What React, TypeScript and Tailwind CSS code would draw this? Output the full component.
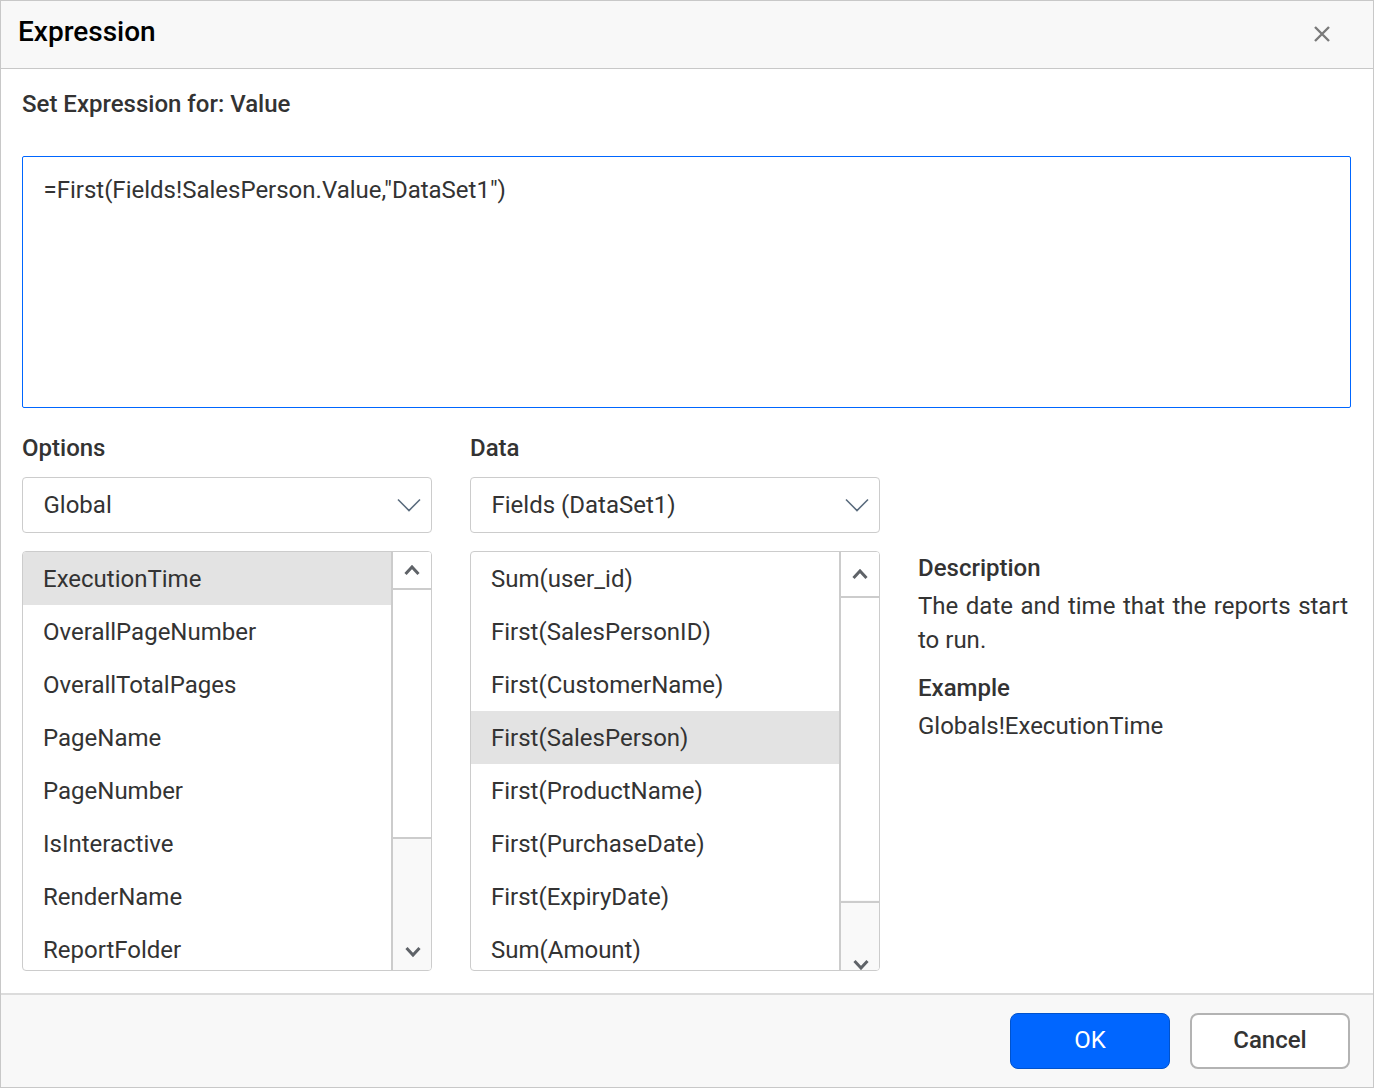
import React from 'react';

const optionItems = ['ExecutionTime', 'OverallPageNumber', 'OverallTotalPages', 'PageName', 'PageNumber', 'IsInteractive', 'RenderName', 'ReportFolder'];
const dataItems = ['Sum(user_id)', 'First(SalesPersonID)', 'First(CustomerName)', 'First(SalesPerson)', 'First(ProductName)', 'First(PurchaseDate)', 'First(ExpiryDate)', 'Sum(Amount)'];

const ChevronDown = () => (
  <svg width="24" height="14" viewBox="0 0 24 14" fill="none" className="text-[#5a6b7d]">
    <path d="M1 1.5 12 12.5 23 1.5" stroke="currentColor" strokeWidth="1.6" />
  </svg>
);

const SmallChevron = ({ up }: { up?: boolean }) => (
  <svg width="16" height="12" viewBox="0 0 16 12" fill="none">
    <path d={up ? 'M1.5 10 8 3 14.5 10' : 'M1.5 2 8 9 14.5 2'} stroke="#5f6368" strokeWidth="3" />
  </svg>
);

interface ListBoxProps {
  items: string[];
  selected: number;
  upHeight: string;
  thumbHeight: string;
  upPad: string;
  downPad: string;
}

const ListBox: React.FC<ListBoxProps> = ({ items, selected, upHeight, thumbHeight, upPad, downPad }) => (
  <div className="flex h-[420px] overflow-hidden rounded-[4px] border border-[#cccccc]">
    <ul className="flex-1 overflow-hidden">
      {items.map((item, i) => (
        <li
          key={item}
          className={`flex h-[53px] items-center pl-[20px] text-[24px] text-[#333333] ${i === selected ? 'bg-[#e3e3e3]' : ''}`}
        >
          {item}
        </li>
      ))}
    </ul>
    <div className="flex w-[40px] flex-none flex-col border-l-2 border-[#cccccc] bg-[#f9f9f9]">
      <div className={`flex flex-none justify-center border-b-2 border-[#cccccc] bg-white ${upHeight} ${upPad}`}>
        <SmallChevron up />
      </div>
      <div className={`flex-none bg-white ${thumbHeight}`} />
      <div className={`flex flex-1 justify-center border-t-2 border-[#cccccc] pl-[2px] ${downPad}`}>
        <SmallChevron />
      </div>
    </div>
  </div>
);

const Select = ({ value }: { value: string }) => (
  <div className="mt-[14px] flex h-[56px] items-center justify-between rounded-[4px] border border-[#cccccc] pl-[20.5px] pr-[10px] text-[24px] text-[#333333]">
    <span>{value}</span>
    <ChevronDown />
  </div>
);

export default function App() {
  return (
    <div className="flex h-[1088px] w-[1374px] flex-col border border-[#c8c8c8] bg-white font-['Roboto',sans-serif]">
      {/* Header */}
      <div className="flex h-[68px] flex-none items-center justify-between border-b border-[#c8c8c8] bg-[#f8f8f8] pl-[17px] pr-[43px]">
        <h1 className="-mt-[6px] text-[28px] font-medium text-black">Expression</h1>
        <svg width="16" height="16" viewBox="0 0 16 16" fill="none" className="-mt-[2px]">
          <path d="M1 1 15 15M15 1 1 15" stroke="#7a7a7a" strokeWidth="2.4" />
        </svg>
      </div>

      {/* Body */}
      <div className="flex-1 pl-[21px] pr-[22px]">
        <div className="mt-[20px] h-[30px] text-[24px] leading-[30px] font-medium text-[#333333]">Set Expression for: Value</div>
        <div className="mt-[37px] h-[252px] rounded-[2px] border border-[#0066ff] pl-[20.5px] pt-[17px] text-[24px] leading-[32px] text-[#333333]">
          =First(Fields!SalesPerson.Value,"DataSet1")
        </div>

        <div className="mt-[25px] flex gap-[38px]">
          <div className="w-[410px] flex-none">
            <div className="h-[30px] text-[24px] leading-[30px] font-medium text-[#333333]">Options</div>
            <Select value="Global" />
            <div className="mt-[18px]">
              <ListBox items={optionItems} selected={0} upHeight="h-[38px]" thumbHeight="h-[247px]" upPad="pt-[12px]" downPad="items-end pb-[12px]" />
            </div>
          </div>
          <div className="w-[410px] flex-none">
            <div className="h-[30px] text-[24px] leading-[30px] font-medium text-[#333333]">Data</div>
            <Select value="Fields (DataSet1)" />
            <div className="mt-[18px]">
              <ListBox items={dataItems} selected={3} upHeight="h-[46px]" thumbHeight="h-[302px]" upPad="pt-[16px]" downPad="items-end translate-y-[1px]" />
            </div>
          </div>
          <div className="mt-[118px] flex-1 pr-[3px] text-[24px] leading-[34px] text-[#333333]">
            <div className="font-medium">Description</div>
            <div className="mt-[4px] text-justify">The date and time that the reports start to run.</div>
            <div className="mt-[14px] font-medium">Example</div>
            <div className="mt-[4px]">Globals!ExecutionTime</div>
          </div>
        </div>
      </div>

      {/* Footer */}
      <div className="flex h-[94px] flex-none items-center justify-end gap-[20px] border-t-2 border-[#dcdcdc] bg-[#f8f8f8] pr-[23px]">
        <button className="h-[56px] w-[160px] rounded-[8px] border border-[#0052cc] bg-[#0066ff] pb-[2px] text-[24px] text-white">OK</button>
        <button className="h-[56px] w-[160px] rounded-[8px] border-2 border-[#b3b3b3] bg-white pb-[2px] text-[24px] font-medium text-[#333333]">Cancel</button>
      </div>
    </div>
  );
}
